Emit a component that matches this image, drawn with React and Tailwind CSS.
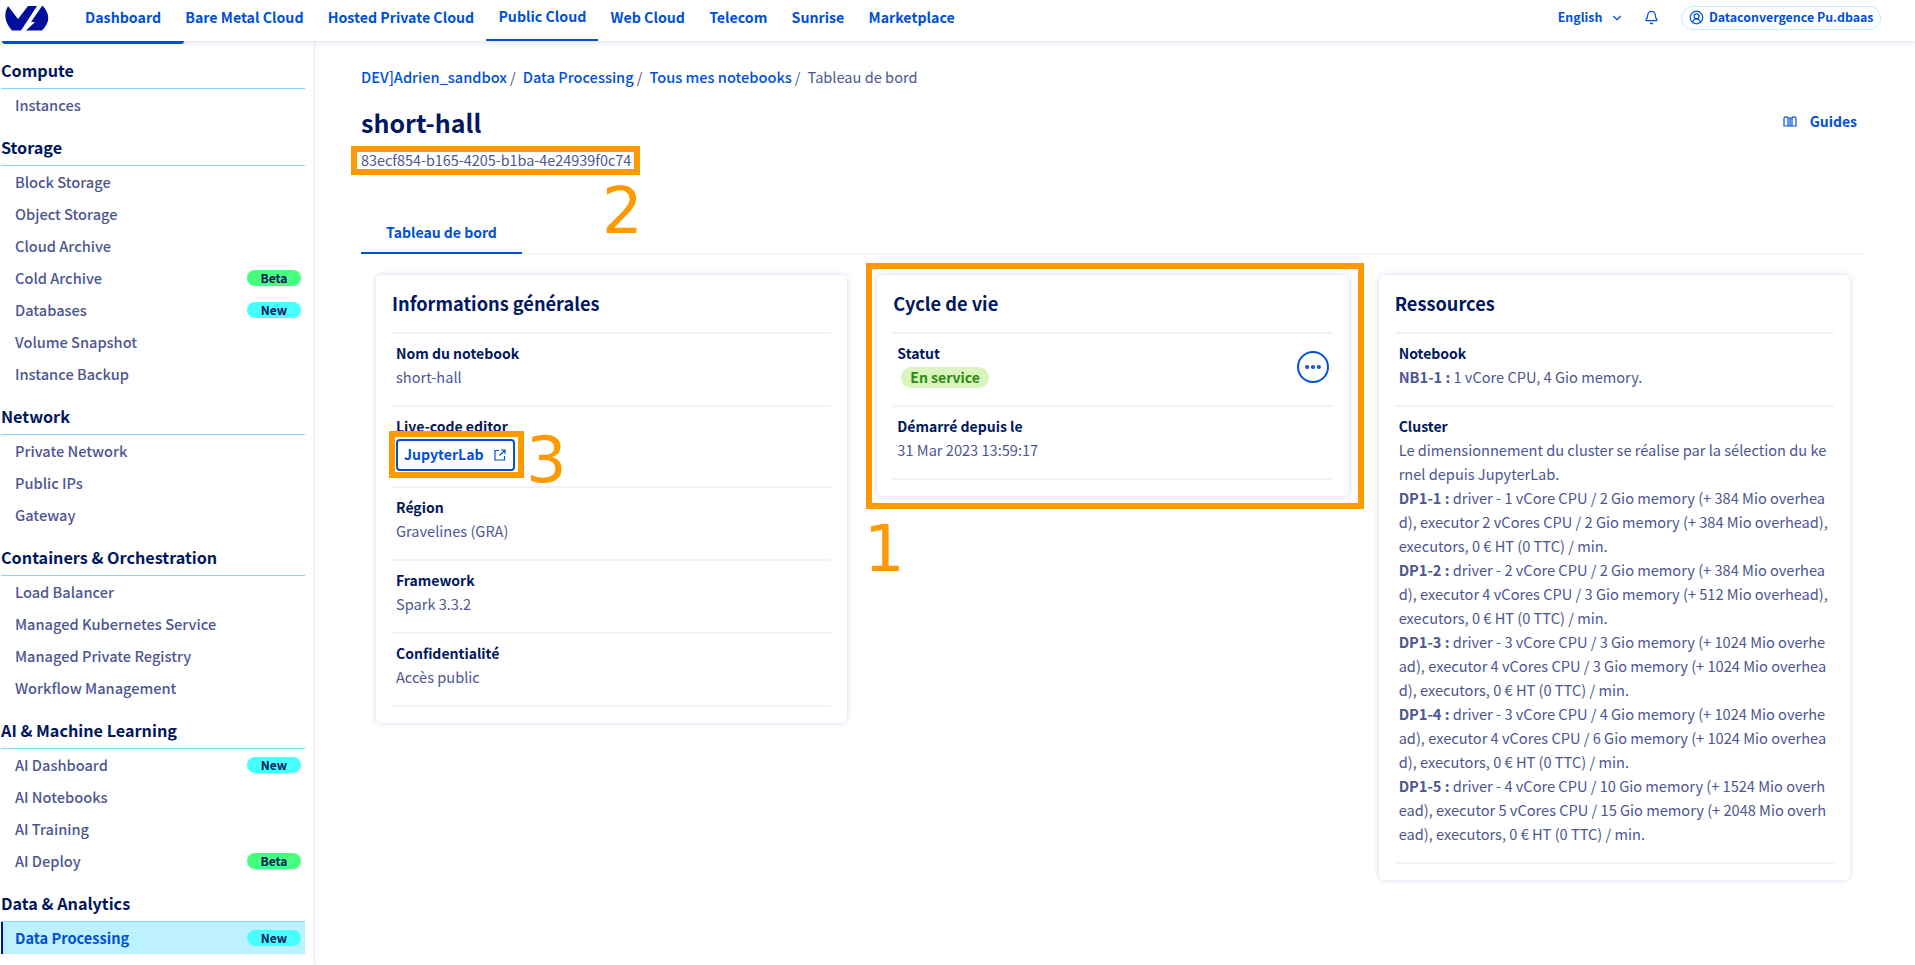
import React from "react";
import { ChevronDown, Bell, CircleUserRound, Ellipsis } from "lucide-react";

const font = "font-['Noto_Sans_CJK_SC','Noto_Sans',sans-serif]";

const topLinks = ["Dashboard", "Bare Metal Cloud", "Hosted Private Cloud", "Public Cloud", "Web Cloud", "Telecom", "Sunrise", "Marketplace"];

const menu = [
  { title: "Compute", items: [{ label: "Instances" }] },
  {
    title: "Storage",
    items: [
      { label: "Block Storage" },
      { label: "Object Storage" },
      { label: "Cloud Archive" },
      { label: "Cold Archive", badge: "Beta" },
      { label: "Databases", badge: "New" },
      { label: "Volume Snapshot" },
      { label: "Instance Backup" },
    ],
  },
  { title: "Network", items: [{ label: "Private Network" }, { label: "Public IPs" }, { label: "Gateway" }] },
  {
    title: "Containers & Orchestration",
    items: [
      { label: "Load Balancer" },
      { label: "Managed Kubernetes Service" },
      { label: "Managed Private Registry" },
      { label: "Workflow Management" },
    ],
  },
  {
    title: "AI & Machine Learning",
    items: [
      { label: "AI Dashboard", badge: "New" },
      { label: "AI Notebooks" },
      { label: "AI Training" },
      { label: "AI Deploy", badge: "Beta" },
    ],
  },
  { title: "Data & Analytics", items: [{ label: "Data Processing", badge: "New", active: true }] },
];

const clusters = [
  ["DP1-1 :", " driver - 1 vCore CPU / 2 Gio memory (+ 384 Mio overhead), executor 2 vCores CPU / 2 Gio memory (+ 384 Mio overhead), executors, 0 € HT (0 TTC) / min."],
  ["DP1-2 :", " driver - 2 vCore CPU / 2 Gio memory (+ 384 Mio overhead), executor 4 vCores CPU / 3 Gio memory (+ 512 Mio overhead), executors, 0 € HT (0 TTC) / min."],
  ["DP1-3 :", " driver - 3 vCore CPU / 3 Gio memory (+ 1024 Mio overhead), executor 4 vCores CPU / 3 Gio memory (+ 1024 Mio overhead), executors, 0 € HT (0 TTC) / min."],
  ["DP1-4 :", " driver - 3 vCore CPU / 4 Gio memory (+ 1024 Mio overhead), executor 4 vCores CPU / 6 Gio memory (+ 1024 Mio overhead), executors, 0 € HT (0 TTC) / min."],
  ["DP1-5 :", " driver - 4 vCore CPU / 10 Gio memory (+ 1524 Mio overhead), executor 5 vCores CPU / 15 Gio memory (+ 2048 Mio overhead), executors, 0 € HT (0 TTC) / min."],
];

const Logo = () => (
  <svg width="45" height="26" viewBox="0 0 45 26" className="block">
    <path d="M4 1 L14 14 L24 1 L33 1 L17 25.5 L8 25.5 Q-3 13 4 1 Z" fill="#000e9c" />
    <path d="M39 1 Q50 14 38 25.5 L22 25.5 L31 17 L27 17 L38 1 Z" fill="#000e9c" />
  </svg>
);

const Badge = ({ text }) => (
  <span
    className={`ml-auto mr-[4px] flex h-[16px] w-[54px] items-center justify-center rounded-full text-[12px] leading-none font-semibold text-[#00185e] ${
      text === "Beta" ? "bg-[#47ff7e]" : "bg-[#47ffff]"
    }`}
  >
    {text}
  </span>
);

const Sidebar = () => (
  <aside className="w-[313px] shrink-0 overflow-hidden pt-[18px] pr-[8px] pl-px shadow-[2px_0_5px_rgba(0,14,156,0.08)]">
    {menu.map((section) => (
      <div key={section.title} className="mb-[15px]">
        <div className="h-[30px] border-b border-[#85d9fd] text-[16.2px] leading-[22px] font-semibold text-[#00185e]">
          {section.title}
        </div>
        {section.items.map((item) => (
          <div
            key={item.label}
            className={`flex h-[32px] items-center text-[14.6px] ${
              item.active ? "border-l-2 border-[#000e9c] bg-[#bef1ff] pl-[12px] font-semibold text-[#0050d7]" : "pl-[14px] font-medium text-[#4d5693]"
            }`}
          >
            {item.label}
            {item.badge && <Badge text={item.badge} />}
          </div>
        ))}
      </div>
    ))}
  </aside>
);

const Row = ({ label, children, right }) => (
  <div className="flex items-center justify-between border-b-2 border-[#f2f2f6] px-[4px] pt-[7px] pb-[16px]">
    <div>
      <div className="text-[14px] leading-[24px] font-semibold text-[#00185e]">{label}</div>
      <div className="text-[14.6px] leading-[24px] text-[#4d5693]">{children}</div>
    </div>
    {right}
  </div>
);

const Card = ({ title, children }) => (
  <section className="rounded-[6px] bg-white p-[16px] shadow-[0_0_6px_rgba(0,14,156,0.16)]">
    <h3 className="border-b-2 border-[#f2f2f6] pb-[16px] text-[18.2px] leading-[25px] font-semibold text-[#00185e]">{title}</h3>
    {children}
  </section>
);

export default function App() {
  return (
    <div className={`relative h-[965px] w-[1915px] overflow-hidden bg-white ${font}`}>
      <header className="relative z-10 flex h-[41px] bg-white shadow-[0_2px_4px_rgba(0,14,156,0.1)]">
        <div className="w-[73px] pt-[5px] pl-[4px]">
          <Logo />
        </div>
        <nav className="flex h-full">
          {topLinks.map((link) => (
            <a
              key={link}
              className={`flex h-full items-center px-[12.1px] pb-[6px] text-[14.2px] font-semibold text-[#0050d7] ${
                link === "Public Cloud" ? "border-b-[2px] border-[#0050d7]" : ""
              }`}
            >
              {link}
            </a>
          ))}
        </nav>
        <div className="ml-auto flex h-[35px] items-center pr-[34px] text-[12.4px] font-semibold text-[#0050d7]">
          <span>English</span>
          <ChevronDown size={14} className="ml-[8px]" />
          <Bell size={15} className="ml-[20px]" />
          <div className="ml-[22px] flex h-[24px] items-center rounded-full border border-[#bef1ff] px-[6.5px]">
            <CircleUserRound size={15} className="mr-[5px]" />
            Dataconvergence Pu.dbaas
          </div>
        </div>
        <div className="absolute top-[41px] left-[2px] h-[3px] w-[182px] rounded-b-[3px] bg-[#0050d7]" />
      </header>

      <div className="flex h-[924px]">
        <Sidebar />
        <main className="flex-1 pt-[25px] pr-[50px] pl-[48px]">
          <div className="flex h-[22px] items-center gap-[3px] text-[14.6px] text-[#4d5693]">
            <a className="font-medium text-[#0050d7]">DEV]Adrien_sandbox</a>/
            <a className="ml-[4px] font-medium text-[#0050d7]">Data Processing</a>/
            <a className="ml-[4px] font-medium text-[#0050d7]">Tous mes notebooks</a>/
            <span className="ml-[4px]">Tableau de bord</span>
          </div>
          <div className="mt-[16px] flex items-center justify-between">
            <h1 className="text-[25px] leading-[36px] font-bold text-[#00185e]">short-hall</h1>
            <a className="mr-[8px] mb-[2px] flex items-center text-[14px] font-semibold text-[#0050d7]">
              <svg width="14" height="12" viewBox="0 0 14 12" fill="none" stroke="currentColor" strokeWidth="1.2" className="mr-[13px]">
                <path d="M1 3v8h12V3M1 3c1-1.5 3-1.5 4 0v8M9 11V3c1-1.5 3-1.5 4 0M5 3.5c.6-1 1.4-1 2 0v7.5M7 3.5c.6-1 1.4-1 2 0" />
              </svg>
              Guides
            </a>
          </div>
          <div className="mt-[10px] text-[14.4px] leading-[20px] text-[#4d5693]">83ecf854-b165-4205-b1ba-4e24939f0c74</div>
          <div className="mt-[43px] flex h-[41px] border-b border-[#e5f7ff]">
            <div className="flex h-[41px] w-[161px] items-center justify-center border-b-2 border-[#0050d7] text-[14px] font-semibold text-[#0050d7]">
              Tableau de bord
            </div>
          </div>
          <div className="mt-[21px] grid grid-cols-3 items-start gap-[30px] px-[15px]">
            <Card title="Informations générales">
              <Row label="Nom du notebook">short-hall</Row>
              <div className="border-b-2 border-[#f2f2f6] px-[4px] pt-[7px] pb-[15px]">
                <div className="text-[14px] leading-[24px] font-semibold text-[#00185e]">Live-code editor</div>
                <a className="mt-[1px] flex h-[32px] w-[119px] items-center justify-between rounded-[4px] border-2 border-[#0050d7] pr-[7px] pl-[6px] text-[14.1px] font-semibold text-[#0050d7]">
                  JupyterLab
                  <svg width="12" height="12" viewBox="0 0 12 12" fill="none" stroke="currentColor" strokeWidth="1.2">
                    <path d="M5 1.5H1v9.5h9.5V7M7 1h4v4M11 1L5.5 6.5" />
                  </svg>
                </a>
              </div>
              <Row label="Région">Gravelines (GRA)</Row>
              <Row label="Framework">Spark 3.3.2</Row>
              <Row label="Confidentialité">Accès public</Row>
            </Card>
            <Card title="Cycle de vie">
              <Row
                label="Statut"
                right={
                  <button className="mt-[3px] flex size-[32px] items-center justify-center rounded-full border-2 border-[#0050d7] text-[#0050d7]">
                    <Ellipsis size={20} strokeWidth={3} />
                  </button>
                }
              >
                <span className="ml-[4px] inline-flex h-[21px] items-center rounded-full bg-[#d9f5bd] px-[9px] text-[14px] font-semibold text-[#2e8a0e]">En service</span>
              </Row>
              <Row label="Démarré depuis le">31 Mar 2023 13:59:17</Row>
            </Card>
            <Card title="Ressources">
              <Row label="Notebook">
                <b className="font-bold">NB1-1 :</b> 1 vCore CPU, 4 Gio memory.
              </Row>
              <div className="border-b-2 border-[#f2f2f6] px-[4px] pt-[7px] pb-[16px] text-[14.6px] leading-[24px] break-all text-[#4d5693]">
                <div className="text-[14px] font-semibold text-[#00185e]">Cluster</div>
                <div>Le dimensionnement du cluster se réalise par la sélection du kernel depuis JupyterLab.</div>
                {clusters.map(([name, text]) => (
                  <div key={name}>
                    <b className="font-bold">{name}</b>
                    {text}
                  </div>
                ))}
              </div>
            </Card>
          </div>
        </main>
      </div>

      {/* orange annotations from the screenshot */}
      <div className="absolute top-[146px] left-[351px] h-[29px] w-[289px] border-[6px] border-[#ff9900]" />
      <div className="absolute top-[263px] left-[866px] h-[246px] w-[498px] border-[6px] border-[#ff9900]" />
      <div className="absolute top-[431px] left-[389px] h-[47px] w-[135px] border-[6px] border-[#ff9900]" />
      <span className="absolute top-[173px] left-[602px] font-['DejaVu_Sans'] text-[64px] leading-[76px] text-[#ff9900]">2</span>
      <span className="absolute top-[422px] left-[526px] font-['DejaVu_Sans'] text-[64px] leading-[76px] text-[#ff9900]">3</span>
      <span className="absolute top-[511px] left-[864px] font-['DejaVu_Sans'] text-[64px] leading-[76px] text-[#ff9900]">1</span>
    </div>
  );
}
